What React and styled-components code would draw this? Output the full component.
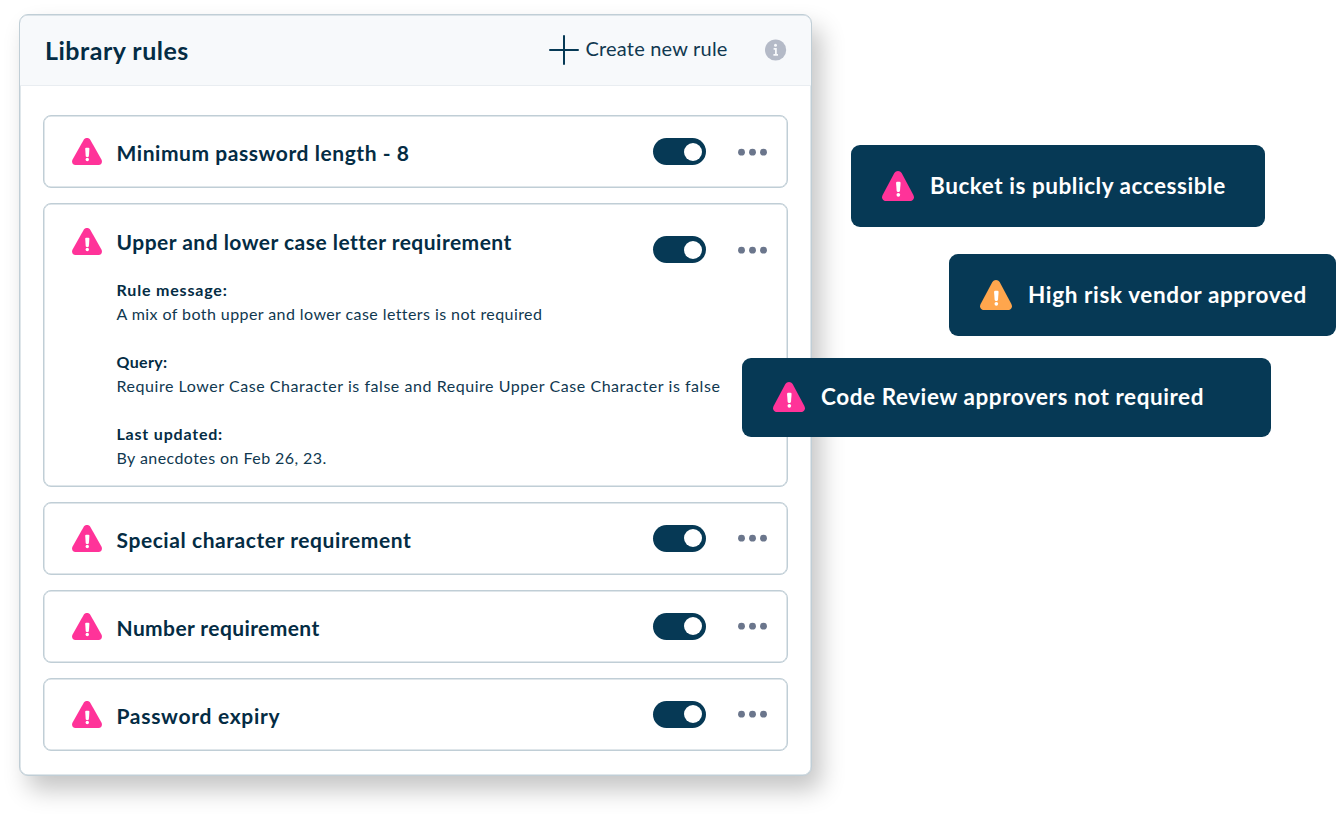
import React from 'react';
import styled, { createGlobalStyle } from 'styled-components';

const GlobalStyle = createGlobalStyle`
  * {
    box-sizing: border-box;
  }
  body {
    margin: 0;
    background: #fff;
    font-family: Lato, 'Open Sans', sans-serif;
    color: #042c44;
  }
  h2, h3, p {
    margin: 0;
  }
`;

const Page = styled.main`
  position: relative;
  width: 1336px;
  height: 819px;
  padding: 14px 0 0 19px;
  overflow: hidden;
`;

const Panel = styled.section`
  width: 792.5px;
  height: 761.5px;
  border: 1px solid #c0ced6;
  border-radius: 9px;
  background: #fff;
  box-shadow: inset 0 0 0 0.5px #c0ced6, 9px 14px 25px rgba(0, 0, 0, 0.23);
`;

const PanelHeader = styled.header`
  display: flex;
  align-items: center;
  height: 71px;
  padding: 0 24px 0 25px;
  border-bottom: 1px solid #e9edf1;
  border-radius: 8px 8px 0 0;
  background: #f7f9fb;
  box-shadow: inset 0 0.5px 0 #c0ced6;
`;

const PanelTitle = styled.h2`
  flex: 1;
  padding-bottom: 1px;
  font-size: 25px;
  line-height: 30px;
  font-weight: 700;
  letter-spacing: ${(p) => p.$spacing}px;
`;

const CreateButton = styled.button`
  display: flex;
  align-items: center;
  gap: 7px;
  margin-right: 37px;
  padding: 0;
  border: 0;
  background: none;
  color: #103850;
  font: 400 20px/24px Lato, sans-serif;
  letter-spacing: ${(p) => p.$spacing}px;
  white-space: nowrap;
  span {
    width: 142px;
    padding-bottom: 4px;
    text-align: left;
  }
`;

const RuleList = styled.div`
  display: flex;
  flex-direction: column;
  gap: 15px;
  padding: 29px 22.5px 0 23px;
`;

const RuleCard = styled.article`
  display: flex;
  align-items: flex-start;
  height: ${(p) => (p.$open ? 283.4 : 73.2)}px;
  padding: ${(p) => (p.$open ? 24 : 22)}px 19px 0 28px;
  border: 1px solid #c0ced6;
  border-radius: 8px;
  box-shadow: inset 0 0 0 0.5px #c0ced6;
  svg {
    flex: none;
  }
`;

const RuleText = styled.div`
  flex: 1;
  min-width: 0;
  padding: ${(p) => (p.$open ? 0 : 1)}px 0 0 14.5px;
  white-space: nowrap;
`;

const RuleTitle = styled.h3`
  font-size: 21px;
  line-height: 28px;
  font-weight: 700;
  letter-spacing: ${(p) => p.$spacing}px;
`;

const Detail = styled.div`
  margin-top: ${(p) => (p.$first ? 22 : 24)}px;
  font-size: 16px;
  line-height: 24px;
  color: #103850;
`;

const DetailLabel = styled.p`
  font-weight: 700;
  color: #042c44;
  letter-spacing: ${(p) => p.$spacing}px;
`;

const DetailValue = styled.p`
  letter-spacing: ${(p) => p.$spacing}px;
`;

const Controls = styled.div`
  display: flex;
  flex: none;
  align-items: center;
  gap: 32.5px;
  padding-top: ${(p) => (p.$open ? 8 : 0)}px;
`;

const Toggle = styled.div`
  display: flex;
  align-items: center;
  justify-content: flex-end;
  width: 53px;
  height: 27px;
  padding-right: 4px;
  border-radius: 14px;
  background: #063955;
  &::after {
    content: '';
    width: 18px;
    height: 18px;
    border-radius: 50%;
    background: #fff;
  }
`;

const Toast = styled.aside`
  position: absolute;
  left: ${(p) => p.$x}px;
  top: ${(p) => p.$y}px;
  display: flex;
  align-items: center;
  gap: 16px;
  width: ${(p) => p.$w}px;
  height: ${(p) => p.$h}px;
  padding: 1px 0 0 31.5px;
  border-radius: 9px;
  background: #063955;
  color: #fff;
  font-size: 22.5px;
  line-height: 28px;
  font-weight: 700;
  letter-spacing: ${(p) => p.$spacing}px;
  white-space: nowrap;
  svg {
    flex: none;
  }
  span {
    padding-bottom: ${(p) => p.$lift}px;
  }
`;

function WarningIcon({ width = 30, height = 28, color = '#ff3399' }) {
  return (
    <svg width={width} height={height} viewBox="0 0 30 28" preserveAspectRatio="none">
      <path
        d="M11.6 1.9C13.1-.6 16.9-.6 18.4 1.9L29.4 21.6C30.8 24.2 29.4 27 26.6 27H3.4C.6 27-.8 24.2.6 21.6Z"
        fill={color}
      />
      <path d="M13.2 10.8Q13.2 9.8 14.2 9.8H16.4Q17.4 9.8 17.4 10.8L16.9 17.9Q16.8 18.9 15.8 18.9H14.8Q13.8 18.9 13.7 17.9Z" fill="#fff" />
      <circle cx="15.3" cy="21.5" r="1.7" fill="#fff" />
    </svg>
  );
}

function DotsIcon() {
  return (
    <svg width="30" height="8" viewBox="0 0 30 8" fill="#6b768c">
      <circle cx="3.5" cy="4.2" r="3.4" />
      <circle cx="14.5" cy="4.2" r="3.4" />
      <circle cx="25.5" cy="4.2" r="3.4" />
    </svg>
  );
}

function PlusIcon() {
  return (
    <svg width="30" height="30" viewBox="0 0 30 30" stroke="#063955" strokeWidth="2" strokeLinecap="round">
      <path d="M15 1V29M1 15H29" />
    </svg>
  );
}

function InfoIcon() {
  return (
    <svg width="22" height="22" viewBox="0 0 22 22">
      <circle cx="10.6" cy="11" r="10.6" fill="#b4bac7" />
      <circle cx="10.5" cy="6.3" r="1.5" fill="#f7f9fb" />
      <path d="M8.6 9.8H10.9V15.5M8.4 15.8H13" stroke="#f7f9fb" strokeWidth="1.8" fill="none" />
    </svg>
  );
}

const rules = [
  { title: 'Minimum password length - 8', spacing: 0.56 },
  {
    title: 'Upper and lower case letter requirement',
    spacing: 0.48,
    details: [
      { label: 'Rule message:', value: 'A mix of both upper and lower case letters is not required', ls: 0.82, vs: 0.42 },
      { label: 'Query:', value: 'Require Lower Case Character is false and Require Upper Case Character is false', ls: 0.35, vs: 0.55 },
      { label: 'Last updated:', value: 'By anecdotes on Feb 26, 23.', ls: 0.8, vs: 0.43 },
    ],
  },
  { title: 'Special character requirement', spacing: 0.57 },
  { title: 'Number requirement', spacing: 0.4 },
  { title: 'Password expiry', spacing: 0.7 },
];

const toasts = [
  { text: 'Bucket is publicly accessible', x: 850.5, y: 145, w: 414.5, h: 81.5, spacing: 0.55, lift: 0 },
  { text: 'High risk vendor approved', x: 948.5, y: 254, w: 387, h: 81.5, spacing: 0.63, lift: 0, color: '#ffa64d' },
  { text: 'Code Review approvers not required', x: 741.5, y: 357.5, w: 529, h: 79, spacing: 0.56, lift: 2 },
];

function Rule({ title, spacing, details }) {
  const open = Boolean(details);
  return (
    <RuleCard $open={open}>
      <WarningIcon />
      <RuleText $open={open}>
        <RuleTitle $spacing={spacing}>{title}</RuleTitle>
        {open &&
          details.map((d, i) => (
            <Detail key={d.label} $first={i === 0}>
              <DetailLabel $spacing={d.ls}>{d.label}</DetailLabel>
              <DetailValue $spacing={d.vs}>{d.value}</DetailValue>
            </Detail>
          ))}
      </RuleText>
      <Controls $open={open}>
        <Toggle />
        <DotsIcon />
      </Controls>
    </RuleCard>
  );
}

export default function App() {
  return (
    <>
      <GlobalStyle />
      <Page>
        <Panel>
          <PanelHeader>
            <PanelTitle $spacing={0.5}>Library rules</PanelTitle>
            <CreateButton $spacing={0.2}>
              <PlusIcon />
              <span>Create new rule</span>
            </CreateButton>
            <InfoIcon />
          </PanelHeader>
          <RuleList>
            {rules.map((rule) => (
              <Rule key={rule.title} {...rule} />
            ))}
          </RuleList>
        </Panel>
        {toasts.map((t) => (
          <Toast key={t.text} $x={t.x} $y={t.y} $w={t.w} $h={t.h} $spacing={t.spacing} $lift={t.lift}>
            <WarningIcon width={32} height={31} color={t.color} />
            <span>{t.text}</span>
          </Toast>
        ))}
      </Page>
    </>
  );
}
